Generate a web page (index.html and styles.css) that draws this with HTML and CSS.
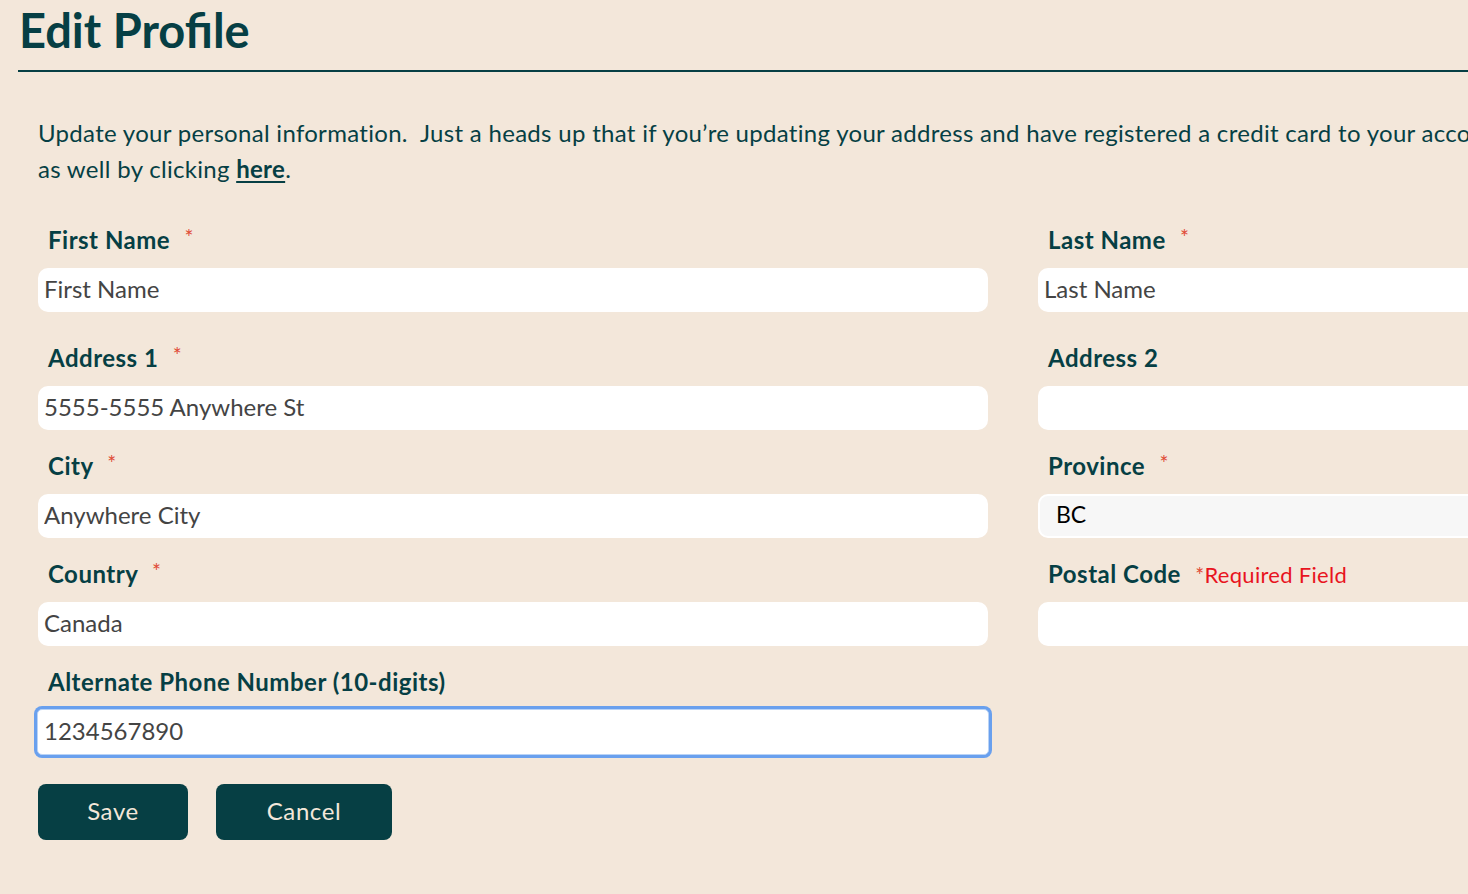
FILE: index.html
```html
<!DOCTYPE html>
<html lang="en">
<head>
    <meta charset="UTF-8">
    <meta name="viewport" content="width=device-width, initial-scale=1.0">
    <title>Edit Profile</title>
    <link rel="stylesheet" href="styles.css">
</head>
<body>
    <div class="page">
        <h1>Edit Profile</h1>

        <form class="profile-form" onsubmit="return false;">
            <p class="intro">
                Update your personal information.&nbsp; Just a heads up that if you’re updating your address and have registered a credit card to your account, please update your billing address<br>
                as well by clicking <a href="#">here</a>.
            </p>

            <div class="fields">
                <div class="field first-row">
                    <label for="firstName">First Name <span class="req">*</span></label>
                    <input type="text" id="firstName" value="First Name">
                </div>
                <div class="field first-row">
                    <label for="lastName">Last Name <span class="req">*</span></label>
                    <input type="text" id="lastName" value="Last Name">
                </div>

                <div class="field">
                    <label for="address1">Address 1 <span class="req">*</span></label>
                    <input type="text" id="address1" value="5555-5555 Anywhere St">
                </div>
                <div class="field">
                    <label for="address2">Address 2</label>
                    <input type="text" id="address2" value="">
                </div>

                <div class="field">
                    <label for="city">City <span class="req">*</span></label>
                    <input type="text" id="city" value="Anywhere City">
                </div>
                <div class="field">
                    <label for="province">Province <span class="req">*</span></label>
                    <div class="select-box" id="province">BC</div>
                </div>

                <div class="field">
                    <label for="country">Country <span class="req">*</span></label>
                    <input type="text" id="country" value="Canada">
                </div>
                <div class="field">
                    <label for="postal">Postal Code <span class="req-note"><span class="star">*</span>Required Field</span></label>
                    <input type="text" id="postal" value="">
                </div>

                <div class="field">
                    <label for="phone">Alternate Phone Number (10-digits)</label>
                    <input type="text" id="phone" class="focused" value="1234567890">
                </div>
            </div>

            <div class="button-row">
                <button type="submit" class="btn save-btn">Save</button>
                <button type="button" class="btn cancel-btn">Cancel</button>
            </div>
        </form>
    </div>
</body>
</html>
```

FILE: styles.css
```css
* {
    margin: 0;
    padding: 0;
    box-sizing: border-box;
}

html {
    overflow: hidden;
}

body {
    font-family: Lato, "Open Sans", sans-serif;
    background-color: #f3e7da;
    color: #063f44;
}

.page {
    width: 2040px;
    padding: 0 0 60px 18px;
}

h1 {
    font-size: 47px;
    font-weight: 700;
    line-height: 60px;
    padding: 0 0 10px 1px;
    border-bottom: 2px solid #063f44;
    color: #063f44;
}

.profile-form {
    padding: 43px 0 0 20px;
}

.intro {
    font-size: 24px;
    letter-spacing: 0.3px;
    line-height: 36px;
    margin-bottom: 39px;
}

.intro a {
    color: #063f44;
    font-weight: 700;
    text-decoration: underline;
    text-decoration-thickness: 2px;
    text-underline-offset: 3px;
}

.fields {
    display: grid;
    grid-template-columns: 950px 950px;
    column-gap: 50px;
    row-gap: 22px;
}

.field label {
    display: block;
    font-size: 24px;
    font-weight: 700;
    letter-spacing: 0.5px;
    line-height: 28px;
    padding-left: 10px;
    margin-bottom: 14px;
}

.field.first-row {
    margin-bottom: 10px;
}

.req {
    color: #e04a35;
    font-size: 21px;
    font-weight: 400;
    line-height: 0;
    vertical-align: 4px;
    margin-left: 8px;
}

.req-note {
    color: #e8141e;
    font-size: 22px;
    font-weight: 400;
    letter-spacing: 0.3px;
    line-height: 0;
    margin-left: 8px;
}

.req-note .star {
    color: #e04a35;
    font-size: 21px;
}

.field input {
    display: block;
    width: 100%;
    height: 44px;
    border: none;
    border-radius: 10px;
    background-color: #fff;
    padding: 0 6px 3px;
    font-family: Lato, "Open Sans", sans-serif;
    font-size: 24px;
    color: #444;
    outline: none;
}

.field input.focused {
    width: 952px;
    height: 46px;
    margin: -1px 0 0 -1px;
    border: 1px solid #b9d3f6;
    border-radius: 5px;
    box-shadow: 0 0 0 3px #69a0ee;
}

.select-box {
    height: 44px;
    border: 2px solid #fff;
    border-radius: 10px;
    background-color: #f7f7f7;
    padding-left: 16px;
    font-size: 23px;
    line-height: 36px;
    color: #000;
}

.button-row {
    display: flex;
    gap: 28px;
    margin-top: 29px;
}

.btn {
    height: 56px;
    border: none;
    border-radius: 8px;
    background-color: #063f44;
    color: #f3e7da;
    font-family: Lato, "Open Sans", sans-serif;
    font-size: 24px;
    letter-spacing: 0.6px;
    padding-bottom: 4px;
    cursor: pointer;
}

.save-btn {
    width: 150px;
}

.cancel-btn {
    width: 176px;
}
```
